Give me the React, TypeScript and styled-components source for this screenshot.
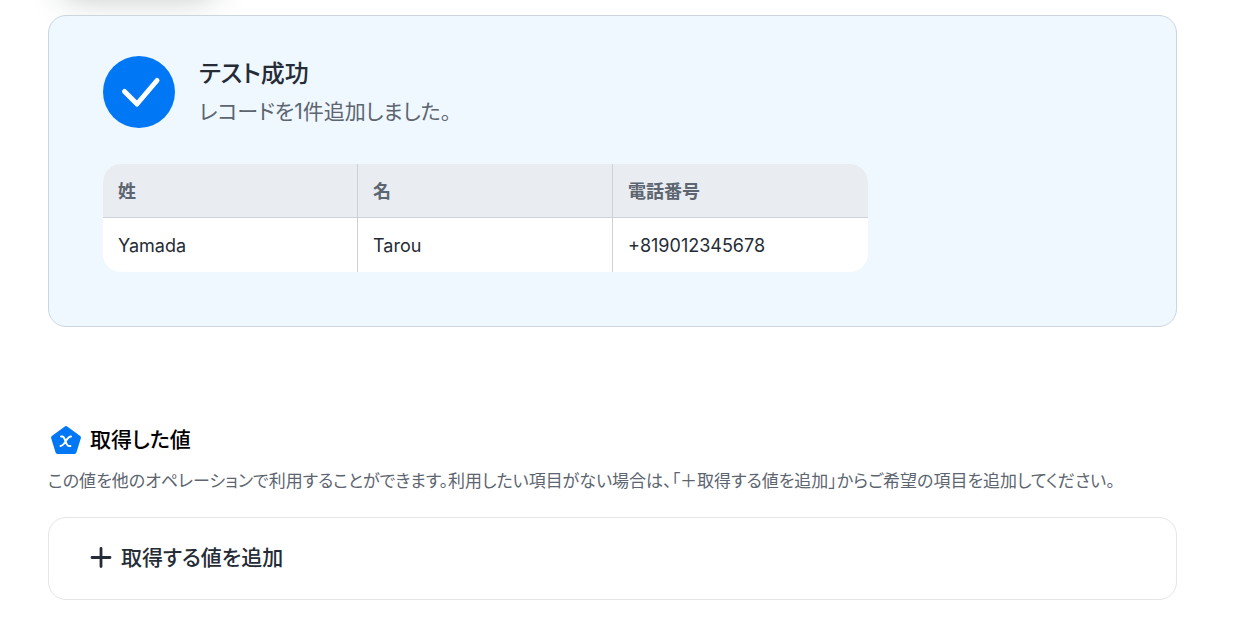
import React from "react";
import styled, { createGlobalStyle } from "styled-components";

const GlobalStyle = createGlobalStyle`
  * { box-sizing: border-box; }
  body {
    margin: 0;
    background: #fff;
    color: #252c36;
    font-family: Inter, "Noto Sans CJK JP", sans-serif;
    font-feature-settings: "palt";
    overflow-x: hidden;
  }
`;

const Page = styled.main`
  position: relative;
  padding: 15px 62px 25px 48px;
  overflow: hidden;
`;

const TopShadow = styled.div`
  position: absolute;
  top: -50px;
  left: 58px;
  width: 160px;
  height: 44px;
  border-radius: 22px;
  box-shadow: 0 4px 32px rgba(30, 50, 50, 0.28);
`;

const ResultPanel = styled.section`
  position: relative;
  padding: 40px 54px 54px;
  border: 1px solid #cdd5df;
  border-radius: 18px;
  background: #eff7ff;
`;

const ResultHeader = styled.header`
  display: flex;
  align-items: flex-start;
  gap: 24px;
  margin-bottom: 32px;
`;

const ResultTitle = styled.h2`
  margin: 0;
  font-size: 24px;
  line-height: 36px;
  font-weight: 500;
`;

const ResultMessage = styled.p`
  margin: 0;
  font-size: 21px;
  line-height: 40px;
  color: #5c6570;
`;

const RecordTable = styled.table`
  width: 765px;
  max-width: 100%;
  table-layout: fixed;
  border-collapse: separate;
  border-spacing: 0;
  border-radius: 18px;
  overflow: hidden;
  background: #fff;
`;

const Cell = styled.td`
  height: 54px;
  padding: 2px 15px 0;
  font-size: 18px;
  line-height: 24px;
  text-align: left;
  &:not(:last-child) { border-right: 1px solid #cdd2da; }
`;

const HeadCell = styled(Cell)`
  background: #e9ecf1;
  color: #5c6570;
  font-weight: 600;
  border-bottom: 1px solid #cdd2da;
`;

const ValuesSection = styled.section`
  margin-top: 95px;
`;

const ValuesTitle = styled.h2`
  display: flex;
  align-items: center;
  gap: 6px;
  margin: 0;
  font-size: 21px;
  line-height: 36px;
  font-weight: 500;
  color: #000;
`;

const Description = styled.p`
  margin: 11px 0 24px;
  font-size: 17px;
  line-height: 24px;
  color: #5c6570;
`;

const AddButton = styled.button`
  display: flex;
  align-items: center;
  gap: 8px;
  width: 100%;
  height: 83px;
  padding: 0 40px 2px;
  border: 1px solid #e4e5e6;
  border-radius: 18px;
  background: #fff;
  color: #252c36;
  font: inherit;
  font-size: 21px;
  line-height: 32px;
  font-weight: 500;
  font-feature-settings: inherit;
  cursor: pointer;
`;

const columns = ["姓", "名", "電話番号"];
const record = ["Yamada", "Tarou", "+819012345678"];

const SuccessIcon = () => (
  <svg width="72" height="72" viewBox="0 0 72 72" aria-hidden="true">
    <circle cx="36" cy="36" r="36" fill="#0077f5" />
    <path d="M21.5 35.500 34 48 54 24.500" fill="none" stroke="#fff" strokeWidth="5" strokeLinecap="round" strokeLinejoin="round" />
  </svg>
);

const ValueIcon = () => (
  <svg width="36" height="36" viewBox="0 0 36 36" aria-hidden="true">
    <path d="M18 6 31 15.500 26.500 30H9.500L5 15.500Z" fill="#0077f5" stroke="#0077f5" strokeWidth="4" strokeLinejoin="round" />
    <path d="M13 14.600H14.200C17.500 14.600 17.500 23.900 20.800 23.900H22.400M23 14.600C18.500 14.600 17 23.900 12.500 23.900" fill="none" stroke="#fff" strokeWidth="2" strokeLinecap="round" />
  </svg>
);

const PlusIcon = () => (
  <svg width="24" height="24" viewBox="0 0 24 24" aria-hidden="true">
    <path d="M12 2.500V20.500M3 11.500H21" fill="none" stroke="currentColor" strokeWidth="2.8" strokeLinecap="round" />
  </svg>
);

export default function App() {
  return (
    <>
      <GlobalStyle />
      <Page lang="ja">
        <TopShadow />
        <ResultPanel>
          <ResultHeader>
            <SuccessIcon />
            <div>
              <ResultTitle>テスト成功</ResultTitle>
              <ResultMessage>レコードを1件追加しました。</ResultMessage>
            </div>
          </ResultHeader>
          <RecordTable>
            <thead>
              <tr>
                {columns.map((name) => (
                  <HeadCell as="th" scope="col" key={name}>{name}</HeadCell>
                ))}
              </tr>
            </thead>
            <tbody>
              <tr>
                {record.map((value) => (
                  <Cell key={value}>{value}</Cell>
                ))}
              </tr>
            </tbody>
          </RecordTable>
        </ResultPanel>
        <ValuesSection>
          <ValuesTitle>
            <ValueIcon />
            取得した値
          </ValuesTitle>
          <Description>
            この値を他のオペレーションで利用することができます。利用したい項目がない場合は、「＋取得する値を追加」からご希望の項目を追加してください。
          </Description>
          <AddButton type="button">
            <PlusIcon />
            取得する値を追加
          </AddButton>
        </ValuesSection>
      </Page>
    </>
  );
}
